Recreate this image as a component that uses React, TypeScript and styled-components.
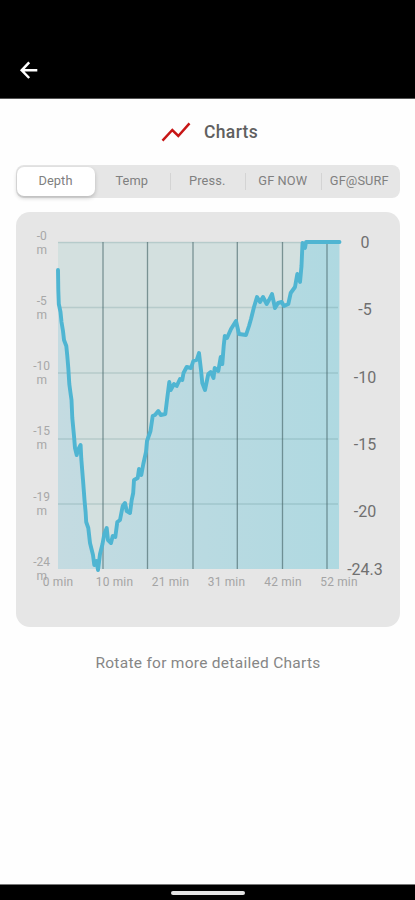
import React from "react";
import styled, { createGlobalStyle } from "styled-components";

const GlobalStyle = createGlobalStyle`
  * { box-sizing: border-box; }
  body { margin: 0; background: #fff; font-family: Roboto, sans-serif; }
`;

const Screen = styled.div`
  width: 415px;
  height: 900px;
  display: flex;
  flex-direction: column;
  background: #fefefe;
  overflow: hidden;
`;

const TopBar = styled.header`
  height: 99px;
  flex: none;
  display: flex;
  align-items: flex-end;
  padding: 0 0 19px 19px;
  background: #000;
  border-bottom: 1px solid #555;
`;

const BackButton = styled.button`
  width: 20px;
  height: 20px;
  padding: 0;
  border: 0;
  background: none;
  display: flex;
`;

const Content = styled.main`
  flex: 1;
  padding: 0 15px;
  display: flex;
  flex-direction: column;
`;

const Heading = styled.div`
  display: flex;
  align-items: center;
  gap: 13px;
  height: 66px;
  padding-left: 146px;
`;

const Title = styled.h1`
  margin: 0;
  font-size: 17.5px;
  font-weight: 500;
  letter-spacing: 0.35px;
  color: #606060;
`;

const Segments = styled.nav`
  height: 33px;
  margin-left: 1px;
  display: grid;
  grid-template-columns: 79px 75.5px 75.5px 75.5px 1fr;
  background: #e6e6e6;
  border-radius: 8px;
  padding: 2px 0 2px 1px;
`;

const Segment = styled.button<{ $active?: boolean; $divided?: boolean }>`
  position: relative;
  padding: ${(p) => (p.$active ? "0 1px 2px 0" : "0 4px 2px 0")};
  border: 0;
  border-radius: 7px;
  font: 400 12.8px Roboto, sans-serif;
  letter-spacing: 0.1px;
  white-space: nowrap;
  color: #808080;
  background: ${(p) => (p.$active ? "#fff" : "transparent")};
  box-shadow: ${(p) => (p.$active ? "0 2px 4px rgba(0,0,0,0.2)" : "none")};
  margin-right: ${(p) => (p.$active ? "1px" : "0")};
  &::after {
    content: "";
    display: ${(p) => (p.$divided ? "block" : "none")};
    position: absolute;
    right: 1px;
    top: 6px;
    width: 1px;
    height: 17px;
    background: #d4d4d4;
  }
`;

const ChartCard = styled.section`
  margin: 14px 0 0 1px;
  width: 384px;
  height: 415px;
  border-radius: 14px;
  background: #e6e6e6;
`;

const ChartSvg = styled.svg`
  display: block;
  font-family: Roboto, sans-serif;
`;

const Hint = styled.p`
  margin: 26px 0 0 1px;
  text-align: center;
  font-size: 15.5px;
  line-height: 20px;
  letter-spacing: 0.28px;
  color: #868686;
`;

const NavBar = styled.footer`
  height: 16px;
  flex: none;
  display: flex;
  justify-content: center;
  align-items: flex-start;
  padding-top: 6px;
  background: #000;
  border-top: 1px solid #777;
`;

const HomeHandle = styled.div`
  width: 74px;
  height: 4px;
  border-radius: 2px;
  background: #e4e4e4;
`;

const tabs = ["Depth", "Temp", "Press.", "GF NOW", "GF@SURF"];

const profile =
  "58,270 58.3,290 58.8,304 60.5,312 61.5,322 63,331 64,340 66.3,346 67.3,356 68.3,368 69.3,384 70.5,393 71.5,400 72.3,418 74,436 75,448 76.7,455 78,450 80.6,445 81.3,459 83,480 84.5,500 85.6,512 86.2,522 88.3,528 90,543 93,555 94.3,565 96.5,561 98,570 100,554 102.5,544 104.3,534 106.7,528 108,540 111,543 112.7,536 115.3,537 117.3,522 120,520 122.7,506 125,503 126.7,511 130,513 131.7,500 133.2,493 134,480 137.7,478 139,469 141.3,475 143.3,464 146,452 147,441 150.5,431 152.7,416 155,415 158.3,411 160.7,415 165.3,414 167,400 169.3,382 170.7,390 174,384 176.7,386 180,379 182.3,380 183.5,373 186.7,367 191,368 193.3,361 196.7,360 199,353 201,370 202.3,383 205,390 208.3,374 210.7,372 213.5,378 214.7,368 218.3,371 220.7,357 222.3,364 223.7,346 224.8,336 227,338 231,329 236,321 239,334 246,335 249,326 251,319 254,307 257,297 260,302 263,297 266.7,304 269,300 272,294 275,308 278,303 281.7,302 284,306 288.3,304 290.7,293 295,287 297.3,274 300,282 301.5,266 302.5,243 305,248 306,242 339.5,242";

const columns = [103, 147.5, 193, 237.3, 282.5, 327];
const rows = [242.5, 307.5, 373, 439, 504];

const depthLabels: [string, number][] = [
  ["-0", 239.5], ["-5", 304.5], ["-10", 370], ["-15", 435], ["-19", 501], ["-24", 566],
];
const scaleLabels: [string, number][] = [
  ["0", 248], ["-5", 315], ["-10", 382.5], ["-15", 449.5], ["-20", 516.5], ["-24.3", 574.5],
];
const timeLabels: [string, number][] = [
  ["0 min", 58], ["10 min", 114.5], ["21 min", 170.5], ["31 min", 226.5], ["42 min", 283], ["52 min", 339],
];

function DepthChart() {
  return (
    <ChartSvg width="384" height="415" viewBox="16 212 384 415">
      <defs>
        <linearGradient id="water" x1="0" x2="1">
          <stop offset="0" stopColor="#c4dbe1" />
          <stop offset="1" stopColor="#afd9e1" />
        </linearGradient>
      </defs>
      <rect x="58" y="242" width="281" height="327" fill="#d3e0df" />
      <polygon points={`58,569 ${profile} 339,569`} fill="url(#water)" />
      {rows.map((y) => (
        <line key={y} x1="58" x2="338" y1={y} y2={y} stroke="#527e83" strokeOpacity="0.22" strokeWidth="1.3" />
      ))}
      {columns.map((x) => (
        <line key={x} x1={x} x2={x} y1="242" y2="569" stroke="#4a686c" strokeOpacity="0.66" strokeWidth="1.3" />
      ))}
      <polyline points={profile} fill="none" stroke="#4fb5d2" strokeWidth="3.9" strokeLinejoin="round" strokeLinecap="round" />
      <g fill="#a8a8a8" fontSize="12" textAnchor="middle">
        {depthLabels.map(([label, y]) => (
          <React.Fragment key={label}>
            <text x="41.7" y={y}>{label}</text>
            <text x="41.7" y={y + 14}>m</text>
          </React.Fragment>
        ))}
      </g>
      <g fill="#a4a4a4" fontSize="11.9" textAnchor="middle" letterSpacing="0.2">
        {timeLabels.map(([label, x]) => (
          <text key={label} x={x} y="586">{label}</text>
        ))}
      </g>
      <g fill="#707070" fontSize="16" textAnchor="middle">
        {scaleLabels.map(([label, y]) => (
          <text key={label} x="365" y={y}>{label}</text>
        ))}
      </g>
    </ChartSvg>
  );
}

export default function App() {
  return (
    <Screen>
      <GlobalStyle />
      <TopBar>
        <BackButton aria-label="Back">
          <svg width="20" height="20" viewBox="0 0 20 20" fill="none" stroke="#fff" strokeWidth="2.5">
            <path d="M18.3 11.3H3M10.2 3.4L2.7 11.3l7.5 7.7" />
          </svg>
        </BackButton>
      </TopBar>
      <Content>
        <Heading>
          <svg width="30" height="20" viewBox="0 0 30 20" fill="none" stroke="#c71616" strokeWidth="2.5">
            <path d="M1.5 18.6L11.3 8L17.3 14L28.5 1.4" />
          </svg>
          <Title>Charts</Title>
        </Heading>
        <Segments>
          {tabs.map((tab, i) => (
            <Segment key={tab} $active={i === 0} $divided={i > 0 && i < 4}>{tab}</Segment>
          ))}
        </Segments>
        <ChartCard>
          <DepthChart />
        </ChartCard>
        <Hint>Rotate for more detailed Charts</Hint>
      </Content>
      <NavBar>
        <HomeHandle />
      </NavBar>
    </Screen>
  );
}
